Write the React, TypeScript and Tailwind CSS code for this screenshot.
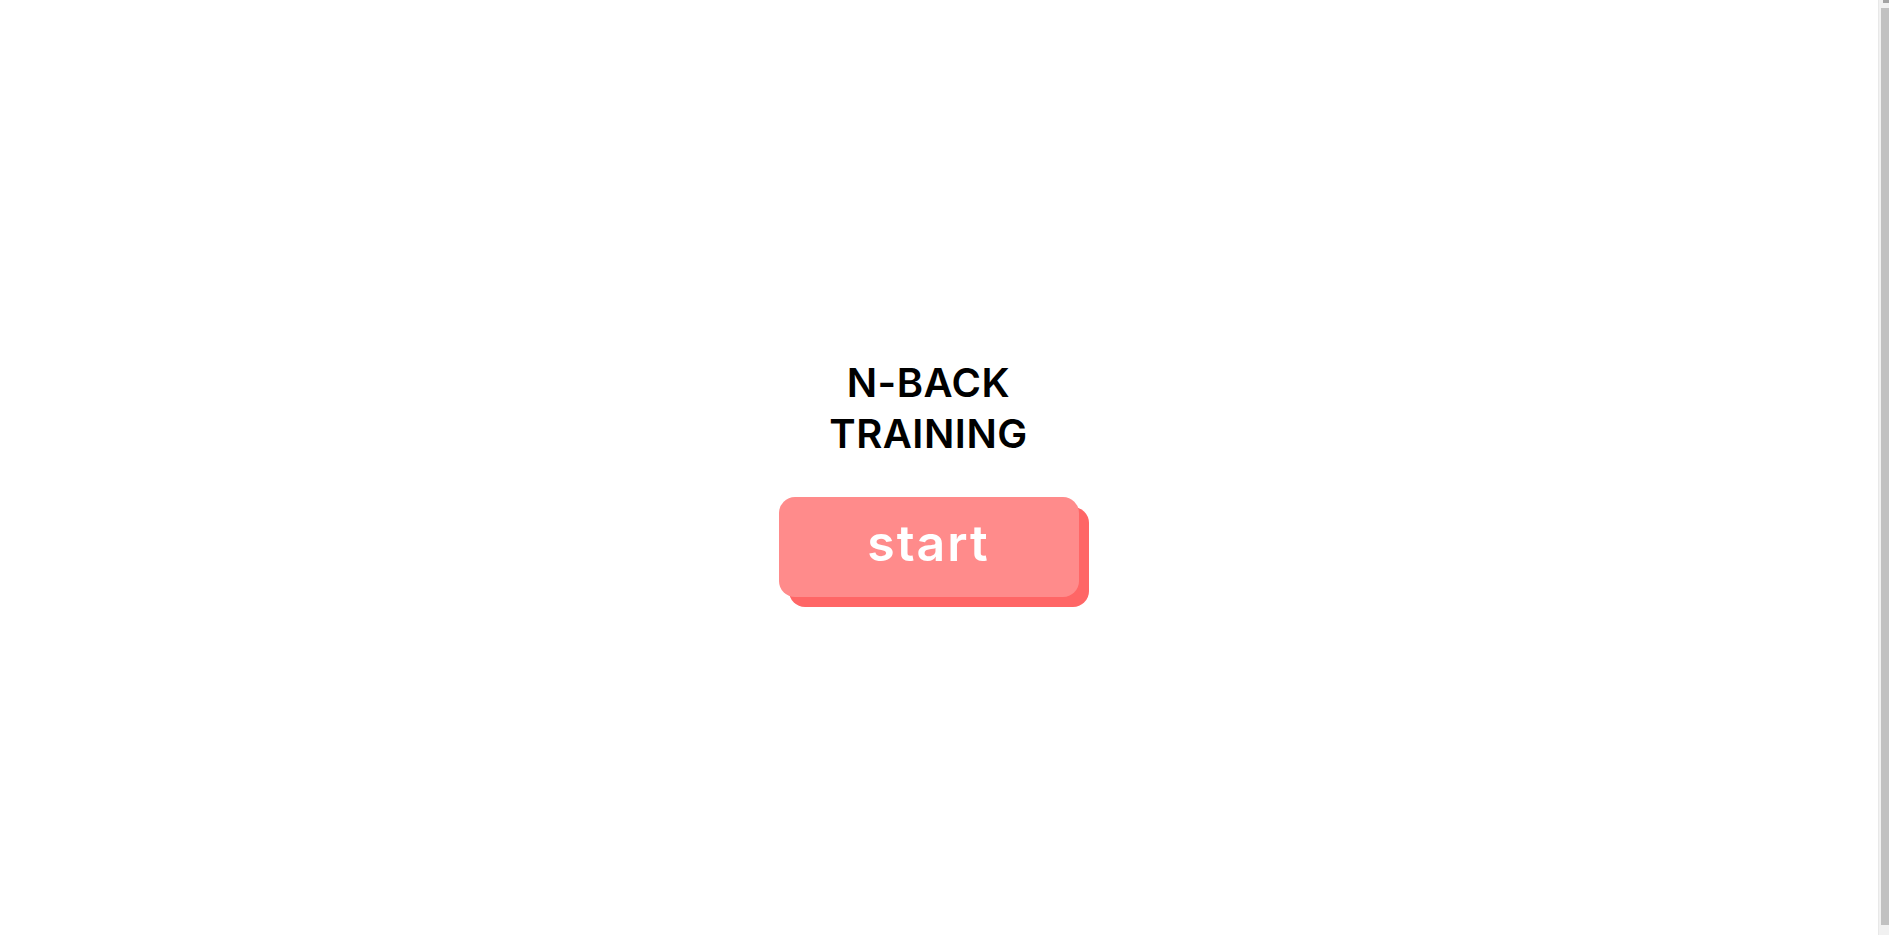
import React from "react";

export default function App() {
  return (
    <div className="h-[935px] w-full bg-white flex overflow-hidden" style={{ fontFamily: '"Inter", "Liberation Sans", sans-serif' }}>
      <main className="flex-1 h-full flex items-center justify-center pr-[21px] pt-[19px]">
        <div className="flex flex-col items-center">
          <h1 className="text-[40px] leading-[51px] font-semibold text-black text-center tracking-[0.5px]">
            N-BACK
            <br />
            TRAINING
          </h1>
          <button className="mt-[38px] w-[300px] h-[100px] rounded-[16px] bg-[#ff8b8b] text-white text-[50px] font-semibold tracking-[2px] leading-none pb-[8px] shadow-[10px_10px_0_0_#ff6666] flex items-center justify-center">
            start
          </button>
        </div>
      </main>
      <div className="w-[11px] h-full bg-[#f1f1f1] border-l border-[#e8e8e8] flex flex-col items-end">
        <div className="h-[3px] w-[6px] bg-[#a3a3a3]" />
        <div className="mt-[5px] w-[8px] h-[917px] bg-[#c1c1c1]" />
      </div>
    </div>
  );
}
